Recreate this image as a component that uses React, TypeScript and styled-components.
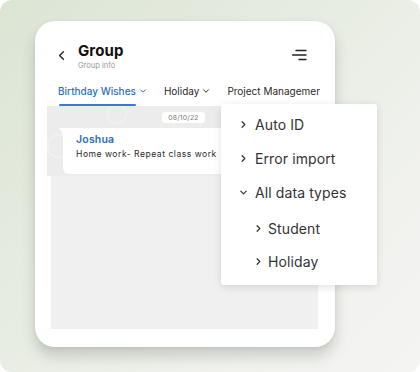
import styled, { createGlobalStyle } from "styled-components";
import { ChevronLeft, ChevronDown, ChevronRight } from "lucide-react";

const GlobalStyle = createGlobalStyle`
    html, body {
        margin: 0;
        padding: 0;
        background: #fff;
    }
    body {
        font-family: Inter, "Open Sans", sans-serif;
    }
`;

const menuItems = [
    { label: "Auto ID", open: false, depth: 0 },
    { label: "Error import", open: false, depth: 0 },
    { label: "All data types", open: true, depth: 0 },
    { label: "Student", open: false, depth: 1 },
    { label: "Holiday", open: false, depth: 1 },
];

export default function App() {
    return (
        <>
            <GlobalStyle />
            <Stage>
                <Phone>
                    <Screen>
                        <Header>
                            <BackBtn>
                                <ChevronLeft size={15} strokeWidth={2.2} color="#222" />
                            </BackBtn>
                            <TitleBlock>
                                <Title>Group</Title>
                                <Subtitle>Group info</Subtitle>
                            </TitleBlock>
                            <MenuIcon width="15" height="12" viewBox="0 0 15 12">
                                <line x1="4" y1="1.5" x2="14" y2="1.5" stroke="#222" strokeWidth="1.4" strokeLinecap="round" />
                                <line x1="0.7" y1="6" x2="14" y2="6" stroke="#222" strokeWidth="1.4" strokeLinecap="round" />
                                <line x1="7" y1="10.5" x2="14" y2="10.5" stroke="#222" strokeWidth="1.4" strokeLinecap="round" />
                            </MenuIcon>
                        </Header>
                        <Tabs>
                            <Tab $active>
                                Birthday Wishes
                                <ChevronDown size={10} strokeWidth={2.4} />
                            </Tab>
                            <Tab>
                                Holiday
                                <ChevronDown size={10} strokeWidth={2.4} />
                            </Tab>
                            <Tab>Project Managemer</Tab>
                        </Tabs>
                        <Chat>
                            <Strip>
                                <DatePill>08/10/22</DatePill>
                                <Bubble>
                                    <Sender>Joshua</Sender>
                                    <Message>Home work- Repeat class work</Message>
                                </Bubble>
                            </Strip>
                            <ChatBody />
                        </Chat>
                    </Screen>
                </Phone>
                <Dropdown>
                    {menuItems.map(item => (
                        <MenuRow key={item.label} $depth={item.depth}>
                            {item.open ? (
                                <ChevronDown size={11} strokeWidth={2.6} />
                            ) : (
                                <ChevronRight size={11} strokeWidth={2.6} />
                            )}
                            {item.label}
                        </MenuRow>
                    ))}
                </Dropdown>
            </Stage>
        </>
    );
}

const Stage = styled.div`
    position: relative;
    width: 420px;
    height: 372px;
    box-sizing: border-box;
    padding: 21px 0 0 35px;
    border-radius: 12px;
    overflow: hidden;
    background: linear-gradient(135deg, #dbe5d4 0%, #e8ede3 45%, #f1f2ee 75%, #f4f4f2 100%);
`;

const Phone = styled.div`
    width: 300px;
    height: 326px;
    background: #fff;
    border-radius: 20px;
    box-shadow: 0 9px 14px rgba(60, 70, 55, 0.22), 0 1px 4px rgba(0, 0, 0, 0.06);
`;

const Screen = styled.div`
    margin-left: 12px;
    width: 273px;
    height: 308px;
    overflow: hidden;
    display: flex;
    flex-direction: column;
`;

const Header = styled.div`
    display: flex;
    align-items: flex-start;
    padding: 21px 13px 0 7px;
`;

const BackBtn = styled.div`
    display: flex;
    margin-top: 6px;
    width: 16px;
`;

const TitleBlock = styled.div`
    display: flex;
    flex-direction: column;
    margin-left: 8px;
    flex: 1;
`;

const Title = styled.div`
    font-size: 15px;
    font-weight: 700;
    color: #111;
    line-height: 18px;
    letter-spacing: 0.1px;
`;

const Subtitle = styled.div`
    font-size: 7.5px;
    color: #9a9a9a;
    line-height: 10px;
    margin-top: 1px;
`;

const MenuIcon = styled.svg`
    margin-top: 7px;
`;

const Tabs = styled.div`
    display: flex;
    align-items: center;
    gap: 16px;
    padding: 14px 0 0 11px;
    white-space: nowrap;
`;

const Tab = styled.div<{ $active?: boolean }>`
    position: relative;
    display: flex;
    align-items: center;
    gap: 2px;
    font-size: 10px;
    font-weight: ${p => (p.$active ? 500 : 400)};
    color: ${p => (p.$active ? "#2d6fc0" : "#2a2a2a")};
    padding-bottom: 9px;

    &::after {
        content: "";
        display: ${p => (p.$active ? "block" : "none")};
        position: absolute;
        left: 1px;
        right: 12px;
        bottom: 0;
        height: 2px;
        border-radius: 1px;
        background: #3b7bcb;
    }
`;

const Chat = styled.div`
    flex: 1;
    display: flex;
    flex-direction: column;
`;

const Strip = styled.div`
    height: 70px;
    display: flex;
    flex-direction: column;
    align-items: center;
    background:
        radial-gradient(circle at 12px 40px, transparent 10px, rgba(255, 255, 255, 0.35) 11px, transparent 13px),
        radial-gradient(circle at 70px 8px, transparent 8px, rgba(255, 255, 255, 0.3) 9px, transparent 11px),
        radial-gradient(circle at 140px 20px, transparent 12px, rgba(255, 255, 255, 0.3) 13px, transparent 15px),
        #ececec;
`;

const DatePill = styled.div`
    margin-top: 6px;
    width: 43px;
    height: 11px;
    border-radius: 3px;
    background: #fff;
    font-size: 6.8px;
    letter-spacing: 0.2px;
    color: #777;
    display: flex;
    align-items: center;
    justify-content: center;
`;

const Bubble = styled.div`
    position: relative;
    align-self: flex-start;
    margin: 5px 0 0 16px;
    width: 200px;
    height: 46px;
    box-sizing: border-box;
    padding: 5px 0 0 13px;
    background: #fff;
    border-radius: 0 6px 6px 6px;

    &::before {
        content: "";
        position: absolute;
        left: -4px;
        top: 0;
        border-top: 7px solid #fff;
        border-left: 5px solid transparent;
    }
`;

const Sender = styled.div`
    font-size: 10.5px;
    font-weight: 600;
    color: #2b6cb8;
    line-height: 13px;
    letter-spacing: 0.2px;
`;

const Message = styled.div`
    font-size: 8.6px;
    letter-spacing: 0.5px;
    color: #2a2a2a;
    margin-top: 3px;
    white-space: nowrap;
`;

const ChatBody = styled.div`
    flex: 1;
    margin: 0 2px 0 4px;
    background: #f0f0f0;
`;

const Dropdown = styled.div`
    position: absolute;
    left: 221px;
    top: 104px;
    width: 156px;
    height: 181px;
    box-sizing: border-box;
    padding-top: 3px;
    background: #fff;
    border-radius: 3px;
    box-shadow: 0 2px 8px rgba(0, 0, 0, 0.12);
`;

const MenuRow = styled.div<{ $depth: number }>`
    display: flex;
    align-items: center;
    gap: ${p => (p.$depth ? 4 : 6)}px;
    height: ${p => (p.$depth ? 33 : 34)}px;
    padding-left: ${p => (p.$depth ? 32 : 17)}px;
    font-size: 14px;
    letter-spacing: 0.1px;
    color: #333;

    &:nth-child(4) {
        margin-top: 3px;
    }

    svg {
        color: #333;
    }
`;
